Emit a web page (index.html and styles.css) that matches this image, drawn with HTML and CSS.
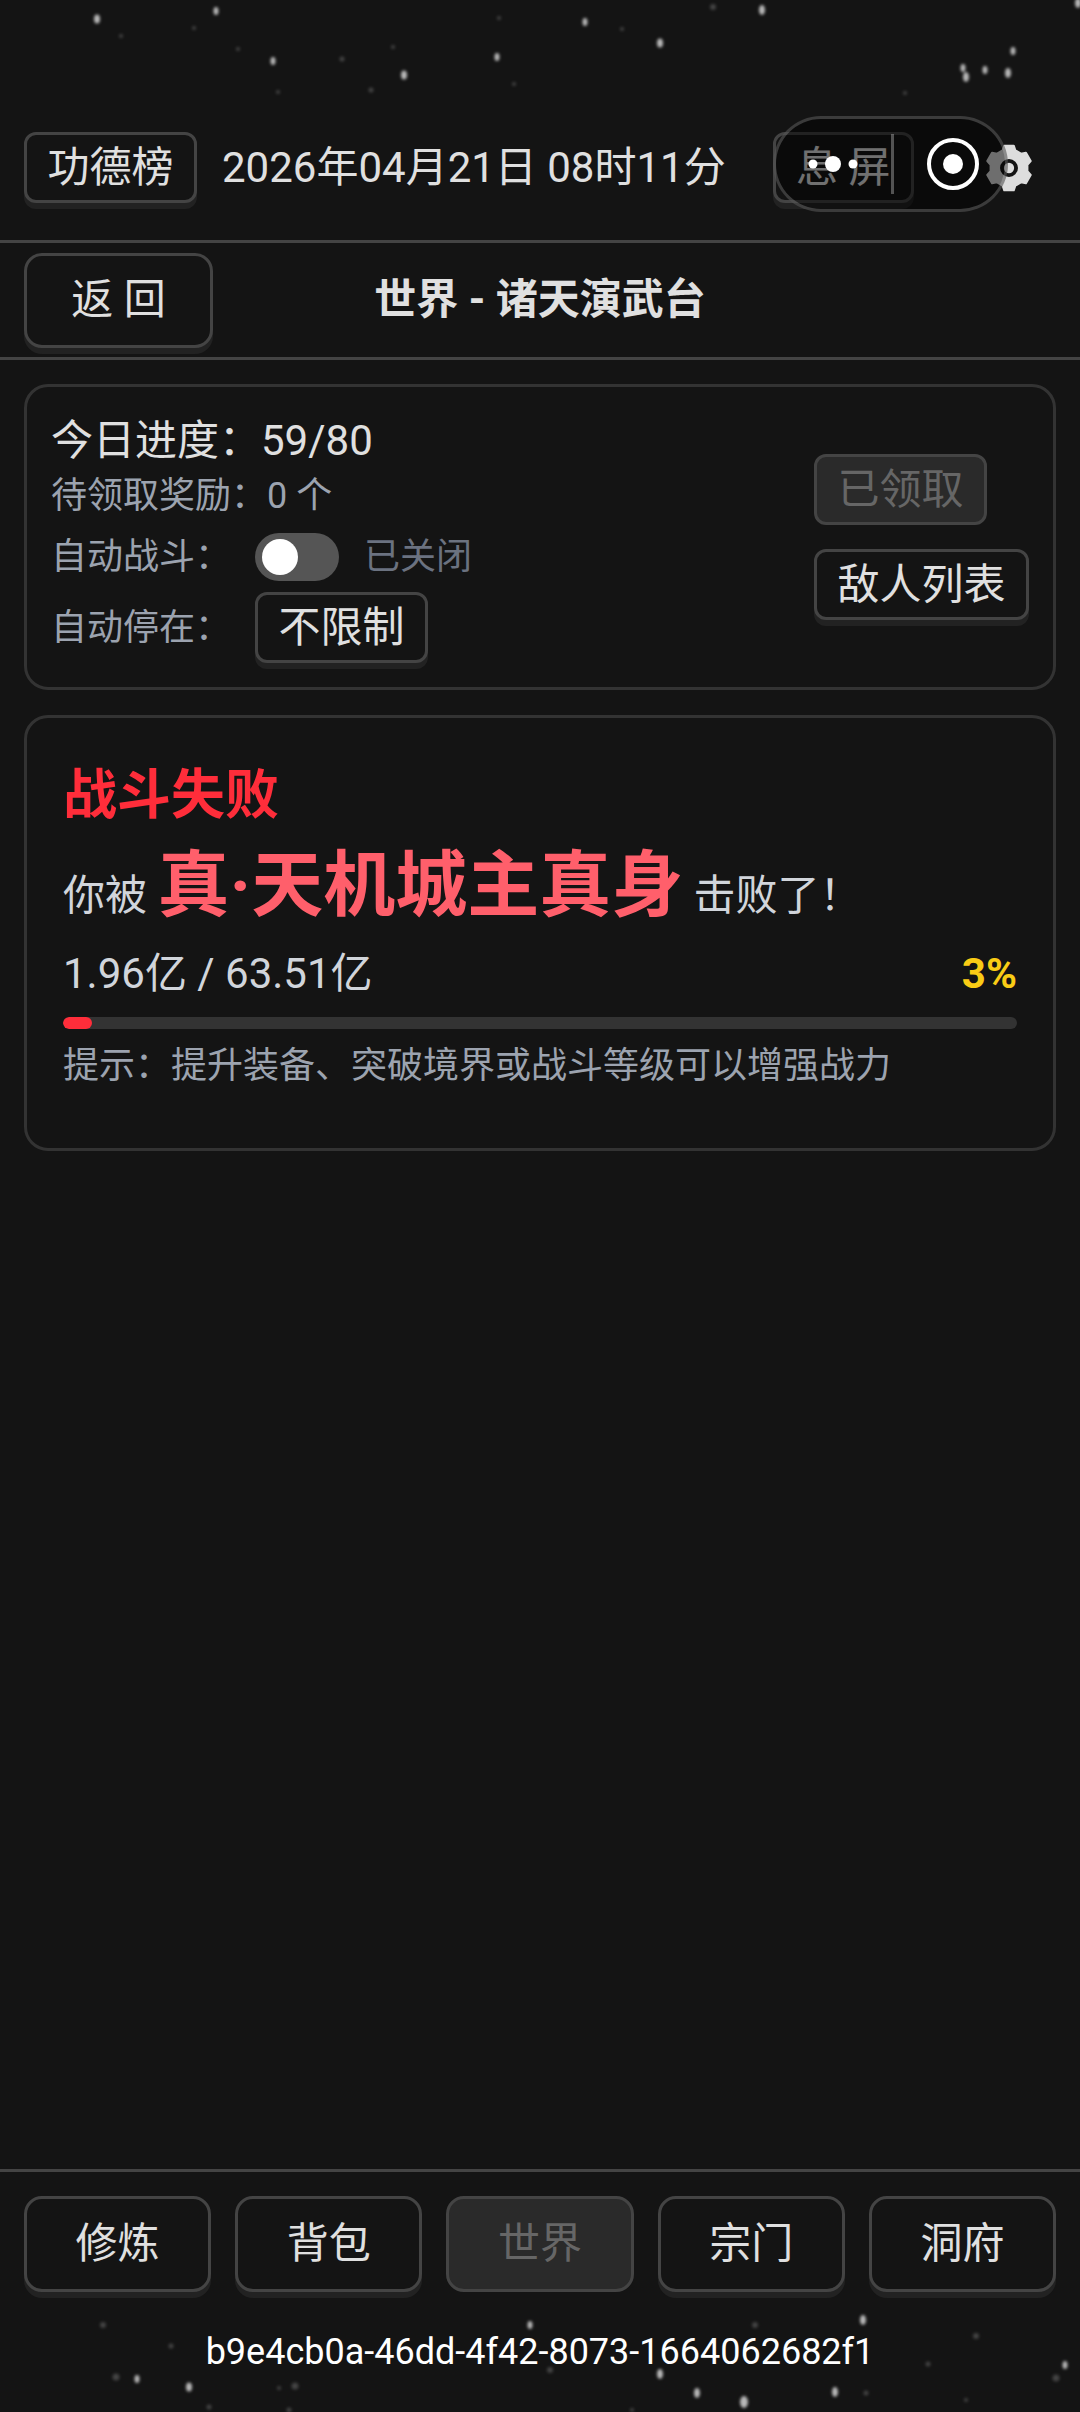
FILE: index.html
```html
<!DOCTYPE html>
<html lang="zh-CN">

<head>
    <meta charset="utf-8">
    <title>诸天演武台</title>
    <link rel="stylesheet" href="styles.css">
</head>

<body>
    <svg class="stars" width="1080" height="2412" viewBox="0 0 1080 2412">
        <g class="star-big">
            <ellipse cx="97" cy="19" rx="3" ry="4.5" /><ellipse cx="216" cy="11" rx="2.5" ry="4" /><ellipse cx="585" cy="22" rx="2.5" ry="4" />
            <ellipse cx="762" cy="10" rx="3" ry="5" /><ellipse cx="273" cy="61" rx="2.5" ry="4" /><ellipse cx="660" cy="43" rx="3" ry="4.5" />
            <ellipse cx="497" cy="57" rx="2.5" ry="4" /><ellipse cx="404" cy="75" rx="3" ry="4.5" /><ellipse cx="1013" cy="51" rx="2.5" ry="4" />
            <ellipse cx="963" cy="68" rx="2.5" ry="4" /><ellipse cx="966" cy="77" rx="3" ry="5" /><ellipse cx="985" cy="70" rx="2.5" ry="4" />
            <ellipse cx="1008" cy="73" rx="3" ry="5" /><ellipse cx="1078" cy="3" rx="3" ry="5" />
            <ellipse cx="530" cy="2325" rx="2.5" ry="4" /><ellipse cx="863" cy="2320" rx="3" ry="5" /><ellipse cx="660" cy="2374" rx="3" ry="5" />
            <ellipse cx="697" cy="2393" rx="3" ry="5" /><ellipse cx="744" cy="2402" rx="4" ry="6" /><ellipse cx="835" cy="2392" rx="3" ry="5" />
            <ellipse cx="189" cy="2387" rx="3" ry="4.5" /><ellipse cx="137" cy="2379" rx="2.5" ry="4" /><ellipse cx="1065" cy="2365" rx="2.5" ry="4" />
        </g>
        <g class="star-small">
            <circle cx="371" cy="90" r="2.5" /><circle cx="278" cy="92" r="2" /><circle cx="194" cy="28" r="2" />
            <circle cx="499" cy="18" r="2" /><circle cx="622" cy="29" r="2" /><circle cx="393" cy="47" r="2" />
            <circle cx="238" cy="49" r="2" /><circle cx="713" cy="7" r="3" /><circle cx="514" cy="84" r="2" />
            <circle cx="905" cy="93" r="2" /><circle cx="342" cy="59" r="2.5" /><circle cx="121" cy="36" r="2" />
            <circle cx="103" cy="2325" r="3" /><circle cx="755" cy="2325" r="3" /><circle cx="171" cy="2346" r="2.5" />
            <circle cx="116" cy="2377" r="3.5" /><circle cx="295" cy="2386" r="3.5" /><circle cx="866" cy="2393" r="2.5" />
            <circle cx="1056" cy="2378" r="3.5" /><circle cx="928" cy="2364" r="2.5" /><circle cx="976" cy="2336" r="3" />
            <circle cx="550" cy="2370" r="3" /><circle cx="279" cy="2388" r="2" /><circle cx="209" cy="2407" r="2.5" />
            <circle cx="289" cy="2410" r="2.5" /><circle cx="632" cy="2410" r="2" /><circle cx="966" cy="2400" r="2" />
        </g>
    </svg>

    <div class="top-bar">
        <button class="btn">功德榜</button>
        <span class="date">2026年04月21日 08时11分</span>
        <button class="btn screen-btn">息 屏</button>
        <svg class="gear" width="56" height="56" viewBox="0 0 54 54">
            <polygon class="gear-body" points="20.84,10.09 22.43,5.48 31.57,5.48 33.16,10.09 38.57,13.21 43.35,12.28 47.92,20.2 44.73,23.87 44.73,30.13 47.92,33.8 43.35,41.72 38.57,40.79 33.16,43.91 31.57,48.52 22.43,48.52 20.84,43.91 15.43,40.79 10.65,41.72 6.08,33.8 9.27,30.13 9.27,23.87 6.08,20.2 10.65,12.28 15.43,13.21" />
            <circle class="gear-hole" cx="27" cy="27" r="6.8" />
        </svg>
    </div>

    <div class="capsule">
        <svg class="capsule-dots" width="60" height="20" viewBox="0 0 60 20">
            <circle cx="10" cy="10" r="4.5" /><circle cx="30" cy="10" r="8" /><circle cx="50" cy="10" r="4.5" />
        </svg>
        <span class="capsule-line"></span>
        <svg class="capsule-target" width="54" height="54" viewBox="0 0 54 54">
            <circle class="ring" cx="27" cy="27" r="24" /><circle cx="27" cy="27" r="10" />
        </svg>
    </div>

    <div class="title-bar">
        <button class="btn back-btn">返 回</button>
        <h1 class="title">世界 - 诸天演武台</h1>
    </div>

    <div class="box info-box">
        <div class="info-left">
            <div class="progress-text">今日进度：59/80</div>
            <div class="reward-text">待领取奖励：0 个</div>
            <div class="auto-row">
                <span class="auto-label">自动战斗：</span>
                <span class="switch"><span class="knob"></span></span>
                <span class="switch-text">已关闭</span>
            </div>
            <div class="auto-row">
                <span class="auto-label">自动停在：</span>
                <button class="btn">不限制</button>
            </div>
        </div>
        <div class="info-right">
            <button class="btn btn-off">已领取</button>
            <button class="btn">敌人列表</button>
        </div>
    </div>

    <div class="box result-box">
        <div class="result-title">战斗失败</div>
        <div class="result-line">你被 <b class="enemy">真·天机城主真身</b> 击败了！</div>
        <div class="hp-row">
            <span>1.96亿 / 63.51亿</span>
            <b class="hp-percent">3%</b>
        </div>
        <div class="hp-bar"><div class="hp-fill" style="width: 3%"></div></div>
        <div class="tip">提示：提升装备、突破境界或战斗等级可以增强战力</div>
    </div>

    <div class="nav">
        <button class="btn nav-btn">修炼</button>
        <button class="btn nav-btn">背包</button>
        <button class="btn nav-btn btn-off">世界</button>
        <button class="btn nav-btn">宗门</button>
        <button class="btn nav-btn">洞府</button>
    </div>

    <div class="user-id">b9e4cb0a-46dd-4f42-8073-1664062682f1</div>
</body>

</html>
```

FILE: styles.css
```css
* {
    box-sizing: border-box;
}

body {
    position: relative;
    display: flex;
    flex-direction: column;
    width: 1080px;
    height: 2412px;
    margin: 0;
    overflow: hidden;
    background-color: #141414;
    color: #e0e0e0;
    font-family: Roboto, "Noto Sans CJK SC", sans-serif;
    font-size: 42px;
}

.stars {
    position: absolute;
    top: 0;
    left: 0;
}

.star-big {
    fill: #fff;
    opacity: 0.7;
    filter: blur(1.5px);
}

.star-small {
    fill: #fff;
    opacity: 0.2;
    filter: blur(1.5px);
}

.btn {
    height: 71px;
    padding: 0 20.5px;
    background-color: #141414;
    border: 3px solid #444;
    border-radius: 12px;
    box-shadow: 0 6px 0 #222;
    color: #e0e0e0;
    font-family: inherit;
    font-size: 42px;
    line-height: 1;
    white-space: nowrap;
}

.btn-off {
    background-color: #2a2a2a;
    box-shadow: none;
    color: #666;
}

.top-bar {
    position: relative;
    display: flex;
    align-items: center;
    height: 111px;
    margin-top: 132px;
    padding-left: 24px;
    padding-bottom: 37px;
    border-bottom: 3px solid #444;
}

.date {
    margin-left: 25px;
    line-height: 1;
    white-space: nowrap;
}

.screen-btn {
    width: 141px;
    margin-left: 47px;
    padding: 0;
}

.gear {
    margin-left: 67px;
}

.gear-body {
    fill: #ddd;
    stroke: #ddd;
    stroke-width: 2;
    stroke-linejoin: round;
}

.gear-hole {
    fill: none;
    stroke: #141414;
    stroke-width: 3.7;
}

.capsule {
    position: absolute;
    top: 116px;
    left: 773px;
    display: flex;
    align-items: center;
    width: 235px;
    height: 96px;
    background-color: rgba(0, 0, 0, 0.5);
    border: 3px solid rgba(255, 255, 255, 0.2);
    border-radius: 48px;
}

.capsule-dots {
    margin-left: 27px;
    fill: #fff;
}

.capsule-line {
    width: 3px;
    height: 60px;
    margin-left: 28px;
    background-color: rgba(255, 255, 255, 0.3);
}

.capsule-target {
    margin-left: 32px;
    fill: #fff;
}

.capsule-target .ring {
    fill: none;
    stroke: #fff;
    stroke-width: 4;
}

.title-bar {
    position: relative;
    display: flex;
    align-items: center;
    height: 117px;
    padding-left: 24px;
    border-bottom: 3px solid #444;
}

.back-btn {
    width: 189px;
    height: 95px;
    padding: 0;
    border-radius: 18px;
}

.title {
    position: absolute;
    left: 0;
    right: 0;
    margin: 0;
    font-size: 42px;
    font-weight: bold;
    line-height: 1;
    text-align: center;
}

.box {
    margin: 24px 24px 0;
    border: 3px solid #333;
    border-radius: 24px;
}

.info-box {
    display: flex;
    justify-content: space-between;
    align-items: center;
    height: 306px;
    padding: 0 24px;
}

.info-left {
    display: flex;
    flex-direction: column;
}

.progress-text {
    line-height: 60px;
}

.reward-text {
    color: #9ca3af;
    font-size: 36px;
    line-height: 50px;
}

.auto-row {
    display: flex;
    align-items: center;
    height: 71px;
    color: #9ca3af;
    font-size: 36px;
}

.auto-label {
    width: 204px;
    line-height: 1;
}

.switch {
    display: flex;
    align-items: center;
    width: 84px;
    height: 48px;
    padding-left: 7px;
    background-color: #555;
    border-radius: 24px;
}

.knob {
    width: 36px;
    height: 36px;
    background-color: #fff;
    border-radius: 50%;
}

.switch-text {
    margin-left: 25px;
    color: #6b7280;
    line-height: 1;
}

.info-right {
    display: flex;
    flex-direction: column;
    align-items: flex-start;
    gap: 24px;
}

.result-box {
    height: 436px;
    margin-top: 25px;
    padding: 36px 36px 0;
}

.result-title {
    color: #ff2d3a;
    font-size: 54px;
    font-weight: bold;
    line-height: 84px;
}

.result-line {
    height: 96px;
    color: #d1d5db;
    line-height: 96px;
}

.enemy {
    color: #ff5f6b;
    font-size: 72px;
}

.hp-row {
    display: flex;
    justify-content: space-between;
    margin-top: 12px;
    color: #d1d5db;
    line-height: 56px;
}

.hp-percent {
    color: #facc15;
}

.hp-bar {
    height: 12px;
    margin-top: 15px;
    background-color: #333;
    border-radius: 6px;
    overflow: hidden;
}

.hp-fill {
    height: 100%;
    background-color: #ff2d3a;
    border-radius: 6px;
}

.tip {
    margin-top: 13px;
    color: #9ca3af;
    font-size: 36px;
    line-height: 48px;
}

.nav {
    display: flex;
    gap: 24px;
    height: 126px;
    margin-top: auto;
    padding: 24px 24px 0;
    border-top: 3px solid #444;
}

.nav-btn {
    flex: 1;
    height: 96px;
    padding: 0;
    border-radius: 18px;
}

.user-id {
    position: relative;
    height: 117px;
    padding-top: 33px;
    color: #fff;
    font-size: 36px;
    line-height: 48px;
    text-align: center;
}
```
